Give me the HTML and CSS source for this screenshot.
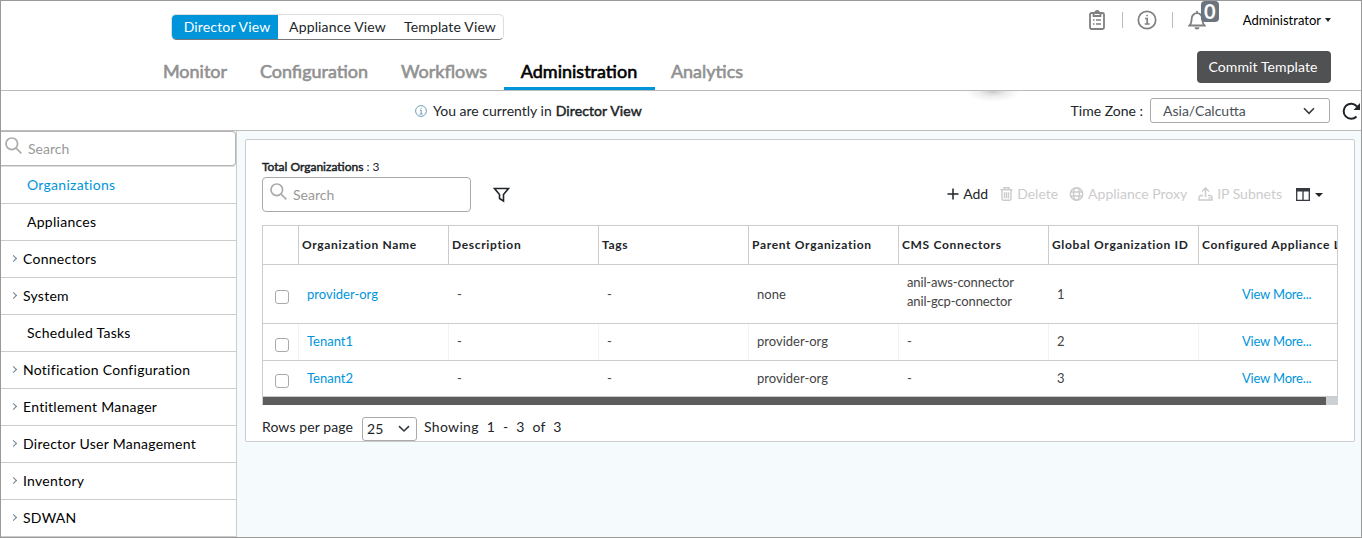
FILE: index.html
```
<!DOCTYPE html>
<html lang="en">
<head>
  <meta charset="UTF-8" />
  <meta name="viewport" content="width=device-width, initial-scale=1.0"/>
  <title>Director - Organizations</title>
  <link rel="stylesheet" href="styles.css">
</head>
<body>
  <header class="header">
    <div class="header-left">
      <div class="views">
        <a class="view active">Director View</a>
        <a class="view">Appliance View</a>
        <a class="view">Template View</a>
      </div>
      <nav class="tabs">
        <a class="tab"><span>Monitor</span></a>
        <a class="tab"><span>Configuration</span></a>
        <a class="tab"><span>Workflows</span></a>
        <a class="tab active"><span>Administration</span></a>
        <a class="tab"><span>Analytics</span></a>
      </nav>
    </div>
    <div class="notch"></div>
    <div class="header-right">
      <div class="user-bar">
        <svg class="icon-clip" width="16" height="20" viewBox="0 0 16 20" fill="none" stroke="#808080" stroke-width="1.8">
          <rect x="1" y="3" width="14" height="16" rx="1.5"/>
          <path d="M4.500 6V3H6a2 2 0 0 1 4 0h1.500v3z"/>
          <path d="M4 10h1.500M7 10h5M4 14h1.500M7 14h5" stroke-width="1.400"/>
        </svg>
        <i class="sep"></i>
        <svg class="icon-info" width="20" height="20" viewBox="0 0 20 20" fill="none" stroke="#808080" stroke-width="1.700">
          <circle cx="10" cy="10" r="8.700"/>
          <path d="M8 8.500h2.200V14M7.700 14h5M9.300 5.500h1.600"/>
        </svg>
        <i class="sep"></i>
        <div class="bell">
          <svg width="18" height="20" viewBox="0 0 18 20" fill="none" stroke="#808080" stroke-width="1.800">
            <path d="M9 1v2M1.500 15.500C3.500 13.500 3.500 12 3.700 8.500a5.300 5.300 0 0 1 10.600 0c.2 3.500.2 5 2.200 7z"/>
            <path d="M6.500 17.300a2.500 2.200 0 0 0 5 0z" fill="#808080" stroke="none"/>
          </svg>
          <span class="badge">0</span>
        </div>
        <span class="user">Administrator</span>
        <i class="caret small"></i>
      </div>
      <button class="commit">Commit Template</button>
    </div>
  </header>

  <div class="context">
    <div class="current">
      <svg width="12" height="12" viewBox="0 0 12 12" fill="none" stroke="#6f9fb5">
        <circle cx="6" cy="6" r="5.400"/>
        <path d="M4.800 5.200h1.400V9M4.500 9h3.200M5.500 3.200h1.200"/>
      </svg>
      <span class="you">You are currently in</span>
      <span class="where">Director View</span>
    </div>
    <div class="zone">
      <span class="zone-label">Time Zone :</span>
      <div class="select zone-select">
        <span>Asia/Calcutta</span>
        <svg width="12" height="8" viewBox="0 0 12 8" fill="none" stroke="#343a40" stroke-width="1.600"><path d="M1 1.300L6 6.300l5-5"/></svg>
      </div>
      <svg class="refresh" width="19" height="18" viewBox="0 0 19 18" fill="none" stroke="#212529" stroke-width="2">
        <path d="M14.500 14.500A7.500 7.500 0 1 1 15 4.500"/>
        <path d="M18 1v7h-6.500z" fill="#212529" stroke="none"/>
      </svg>
    </div>
  </div>

  <div class="content">
    <aside class="sidebar">
      <div class="side-search">
        <svg width="17" height="17" viewBox="0 0 17 17" fill="none" stroke="#aaa" stroke-width="1.700"><circle cx="6.800" cy="6.800" r="5.800"/><path d="M11 11l5.300 5.300"/></svg>
        <span>Search</span>
      </div>
      <a class="item leaf active">Organizations</a>
      <a class="item leaf">Appliances</a>
      <a class="item"><i class="chev"></i>Connectors</a>
      <a class="item"><i class="chev"></i>System</a>
      <a class="item leaf">Scheduled Tasks</a>
      <a class="item"><i class="chev"></i>Notification Configuration</a>
      <a class="item"><i class="chev"></i>Entitlement Manager</a>
      <a class="item"><i class="chev"></i>Director User Management</a>
      <a class="item"><i class="chev"></i>Inventory</a>
      <a class="item"><i class="chev"></i>SDWAN</a>
    </aside>

    <main class="panel">
      <div class="total"><b>Total Organizations</b> : 3</div>
      <div class="toolbar">
        <div class="search">
          <svg width="17" height="17" viewBox="0 0 17 17" fill="none" stroke="#aaa" stroke-width="1.700"><circle cx="6.800" cy="6.800" r="5.800"/><path d="M11 11l5.300 5.300"/></svg>
          <span>Search</span>
        </div>
        <svg class="filter" width="17" height="16" viewBox="0 0 17 16" fill="none" stroke="#212529" stroke-width="1.600"><path d="M1.500 1.500h14l-5 6v6.500l-4-2.500v-4z"/></svg>
        <div class="actions">
          <a class="action add">
            <svg width="12" height="12" viewBox="0 0 12 12" stroke="#212529" stroke-width="1.500"><path d="M6 .5v11M.5 6h11"/></svg>
            <span>Add</span>
          </a>
          <a class="action delete">
            <svg width="13" height="14" viewBox="0 0 13 14" fill="none" stroke="#ccc" stroke-width="1.400"><path d="M.5 2.700h12M4 2.500V.8h5v1.700M2 3v8.700q0 1.500 1.500 1.500h6q1.500 0 1.500-1.500V3M4.500 5.200v6M6.500 5.200v6M8.500 5.200v6"/></svg>
            <span>Delete</span>
          </a>
          <a class="action proxy">
            <svg width="15" height="14" viewBox="0 0 15 14" fill="none" stroke="#ccc" stroke-width="1.500"><circle cx="7.500" cy="7" r="6.200"/><ellipse cx="7.500" cy="7" rx="2.900" ry="6.200"/><path d="M1.300 5h12.400M1.300 9h12.400"/></svg>
            <span>Appliance Proxy</span>
          </a>
          <a class="action subnets">
            <svg width="15" height="14" viewBox="0 0 15 14" fill="none" stroke="#ccc" stroke-width="1.500"><path d="M7.500 10V1.500M4 4.500l3.500-3.500L11 4.500M5 8.500H2.500L1 10v3h13v-3l-1.500-1.500H10M10.500 11h2"/></svg>
            <span>IP Subnets</span>
          </a>
          <svg class="cols" width="14" height="13" viewBox="0 0 14 13" fill="none" stroke="#343a40" stroke-width="1.300"><path d="M.7.7h12.600v11.600H.7zM7 2v10"/><path d="M0 0h14v3.500H0z" fill="#343a40" stroke="none"/></svg>
          <i class="caret"></i>
        </div>
      </div>

      <div class="table">
        <div class="row head">
          <div></div>
          <div>Organization Name</div>
          <div>Description</div>
          <div>Tags</div>
          <div>Parent Organization</div>
          <div>CMS Connectors</div>
          <div>Global Organization ID</div>
          <div>Configured Appliance List</div>
        </div>
        <div class="row tall">
          <div><i class="check"></i></div>
          <div><a>provider-org</a></div>
          <div>-</div>
          <div>-</div>
          <div>none</div>
          <div class="connectors">anil-aws-connector<br>anil-gcp-connector</div>
          <div>1</div>
          <div class="more"><a>View More...</a></div>
        </div>
        <div class="row lined">
          <div><i class="check"></i></div>
          <div><a>Tenant1</a></div>
          <div>-</div>
          <div>-</div>
          <div>provider-org</div>
          <div>-</div>
          <div>2</div>
          <div class="more"><a>View More...</a></div>
        </div>
        <div class="row last">
          <div><i class="check"></i></div>
          <div><a>Tenant2</a></div>
          <div>-</div>
          <div>-</div>
          <div>provider-org</div>
          <div>-</div>
          <div>3</div>
          <div class="more"><a>View More...</a></div>
        </div>
      </div>
      <div class="scrollbar"><div class="thumb"></div></div>

      <div class="pager">
        <span class="per-page">Rows per page</span>
        <div class="select page-select">
          <span>25</span>
          <svg width="12" height="8" viewBox="0 0 12 8" fill="none" stroke="#343a40" stroke-width="1.600"><path d="M1 1.200L6 6l5-4.800"/></svg>
        </div>
        <span class="showing">Showing &nbsp;1 &nbsp;- &nbsp;3 &nbsp;of &nbsp;3</span>
      </div>
    </main>
  </div>
</body>
</html>
```
FILE: styles.css
```
* {
  box-sizing: border-box;
}

body {
  margin: 0;
  height: 538px;
  border: 1px solid #999;
  overflow: hidden;
  background: #fff;
  color: #212529;
  font-family: Lato, "Liberation Sans", sans-serif;
  font-size: 14px;
  white-space: nowrap;
}

svg {
  display: block;
  flex: none;
}

/* header */
.header {
  position: relative;
  display: flex;
  justify-content: space-between;
  height: 90px;
  border-bottom: 1px solid #bbb;
}

.header-left {
  padding: 13px 0 0 146px;
}

.views {
  display: grid;
  grid-template-columns: 106px 117px 108px;
  width: 333px;
  height: 26px;
  margin-left: 24px;
  border: 1px solid #ddd;
  border-bottom-color: #777;
  border-radius: 5px;
  overflow: hidden;
}

.view {
  padding-left: 2px;
  line-height: 24px;
  text-align: center;
  letter-spacing: .15px;
}

.view.active {
  padding-left: 4px;
  background: #0095db;
  color: #fff;
}

.tabs {
  display: grid;
  grid-template-columns: 97px 141px 119px 151px 105px;
  height: 50px;
}

.tab {
  padding-top: 20px;
  text-align: center;
  font-size: 18px;
  line-height: 22px;
  color: #919191;
  -webkit-text-stroke: .6px;
}

.tab span {
  margin-left: -1px;
}

.tab.active {
  color: #000;
  border-bottom: 3px solid #0095db;
}

/* shadow of the collapsed drawer, hangs over the context bar */
.notch {
  position: absolute;
  left: 962px;
  top: 90px;
  width: 60px;
  height: 13px;
  background: radial-gradient(ellipse 28px 11px at 50% 0, #c8c8c8, #eee 50%, transparent);
}

.header-right {
  width: 301px;
  padding-right: 30px;
}

.user-bar {
  display: flex;
  align-items: center;
  height: 38px;
}

.icon-clip {
  margin-left: 29px;
}

.sep {
  width: 1px;
  height: 16px;
  margin: 0 14px 0 17px;
  background: #bbb;
}

.icon-info + .sep {
  margin: 0 15px;
}

.bell {
  position: relative;
}

.badge {
  position: absolute;
  left: 13px;
  top: -9px;
  width: 18px;
  height: 21px;
  border-radius: 4px;
  background: #6c757d;
  color: #fff;
  font-size: 20px;
  font-weight: bold;
  line-height: 20px;
  text-align: center;
}

.user {
  margin-left: 37px;
  color: #000;
  font-size: 13px;
}

.caret {
  border: 4px solid transparent;
  border-top-color: #212529;
  border-bottom: 0;
}

.caret.small {
  margin-left: 4px;
  border-width: 4px 3px 0;
}

.commit {
  display: block;
  width: 134px;
  height: 32px;
  margin: 12px 0 0 auto;
  padding: 0 2px 2px 0;
  border: 0;
  border-radius: 4px;
  background: #505152;
  color: #fff;
  font: 14px Lato, sans-serif;
  letter-spacing: .1px;
}

/* context bar */
.context {
  display: flex;
  justify-content: space-between;
  align-items: center;
  height: 40px;
  border-bottom: 1px solid #bbb;
}

.current {
  display: flex;
  align-items: center;
  margin-left: 414px;
}

.you {
  margin: 0 4px 0 6px;
}

.where {
  letter-spacing: .1px;
  -webkit-text-stroke: .5px;
}

.zone {
  display: flex;
  align-items: center;
}

.zone-label {
  margin-right: 7px;
}

.select {
  display: flex;
  align-items: center;
  justify-content: space-between;
  border: 1px solid #aaa;
  border-radius: 3px;
}

.zone-select {
  width: 180px;
  height: 25px;
  padding: 0 14px 0 12px;
  color: #495057;
}

.refresh {
  margin-left: 12px;
}

/* content */
.content {
  display: flex;
  height: 407px;
  background: #f5fafd;
}

.sidebar {
  width: 236px;
  border-right: 1px solid #ccc;
  background: #fff;
}

.side-search {
  display: flex;
  height: 35px;
  margin-bottom: 1px;
  padding: 5px 0 0 4px;
  border: 1px solid #b5b5b5;
  border-left: 0;
  border-radius: 0 4px 4px 0;
  box-shadow: 0 1px #ddd;
  color: #999;
}

.side-search span {
  margin: 3px 0 0 6px;
}

.item {
  display: flex;
  align-items: center;
  height: 37px;
  padding: 0 0 1px 12px;
  border-bottom: 1px solid #ccc;
  color: #000;
  letter-spacing: .27px;
}

.leaf {
  padding-left: 26px;
}

.item.active {
  color: #0095db;
}

.chev {
  width: 5px;
  height: 5px;
  margin-right: 7px;
  margin-left: -2px;
  border: solid #6c8190;
  border-width: 1px 1px 0 0;
  transform: rotate(45deg);
}

.panel {
  width: 1110px;
  height: 303px;
  margin: 8px 0 0 8px;
  padding: 19px 16px 0;
  border: 1px solid #ccc;
  border-radius: 2px;
  background: #fff;
}

.total {
  height: 18px;
  font-size: 12px;
  line-height: 15px;
}

.total b {
  font-weight: normal;
  -webkit-text-stroke: .5px;
}

.toolbar {
  display: flex;
  align-items: center;
  height: 35px;
}

.search {
  display: flex;
  width: 209px;
  height: 35px;
  padding: 5px 0 0 7px;
  border: 1px solid #aaa;
  border-radius: 4px;
  color: #999;
}

.search span {
  margin: 3px 0 0 6px;
}

.filter {
  margin-left: 22px;
}

.actions {
  display: flex;
  align-items: center;
  margin-left: auto;
  margin-right: 15px;
}

.action {
  display: flex;
  align-items: center;
  padding-bottom: 2px;
  color: #ccc;
}

.action svg {
  margin: 1px 4px 0 0;
}

.add {
  color: #212529;
  margin-right: 12px;
}

.delete,
.proxy {
  margin-right: 11px;
}

.subnets {
  margin-right: 14px;
}

.cols {
  margin-right: 5px;
}

/* table */
.table {
  width: 1076px;
  margin-top: 13px;
  border: 1px solid #ccc;
  border-bottom: 0;
  overflow: hidden;
}

.row {
  display: grid;
  grid-template-columns: 36px repeat(6, 150px) 180px;
  height: 37px;
  border-bottom: 1px solid #ccc;
  font-size: 13px;
  color: #444;
}

.row > div {
  display: flex;
  align-items: center;
  padding-left: 8px;
  border-right: 1px solid transparent;
  line-height: 19px;
}

.row > div:first-child {
  padding: 6px 0 0 12px;
}

.row.head {
  height: 39px;
}

.row.head > div {
  padding: 0 0 2px 3px;
  border-right-color: #ccc;
  color: #212529;
  font-size: 12px;
  font-weight: bold;
  letter-spacing: .67px;
}

.row.tall {
  height: 59px;
}

.row > .connectors {
  padding-bottom: 4px;
  letter-spacing: -.15px;
}

.lined > div {
  padding-bottom: 2px;
  border-right-color: #f3f3f3;
}

.lined > div:first-child {
  padding-bottom: 0;
}

.row.last {
  height: 36px;
}

.last > div:first-child {
  padding-top: 4px;
}

.row a {
  color: #0095db;
}

.row > .more {
  padding-left: 43px;
  letter-spacing: -.2px;
}

.check {
  width: 14px;
  height: 14px;
  border: 1px solid #aaa;
  border-radius: 3px;
}

.scrollbar {
  width: 1076px;
  height: 8px;
  padding-left: 1px;
  background: #cdd0d3;
}

.thumb {
  width: 1063px;
  height: 8px;
  background: #5c5c5c;
}

.pager {
  display: flex;
  height: 36px;
  padding-top: 12px;
  line-height: 20px;
}

.per-page {
  letter-spacing: .1px;
}

.page-select {
  width: 55px;
  height: 24px;
  margin: 0 7px 0 9px;
  padding: 0 6px 0 4px;
}

.showing {
  letter-spacing: .32px;
}
```
